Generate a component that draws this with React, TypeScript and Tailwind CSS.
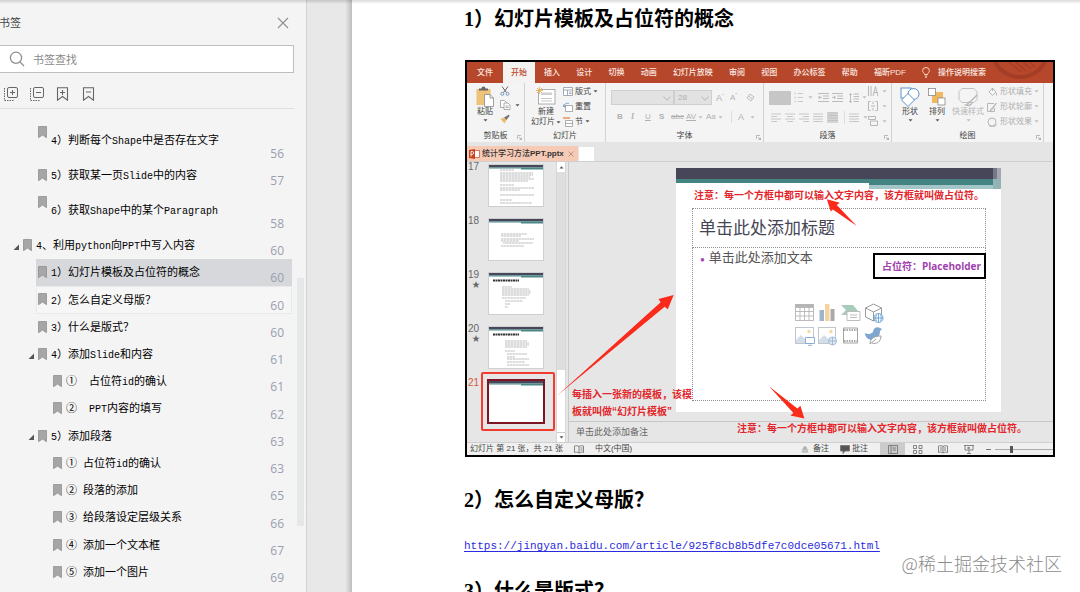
import React from "react";

type Level = 1 | 2 | 3;
type Mark = {
  level: Level;
  title: string;
  page: number;
  open?: boolean;
  state?: "selected" | "hover";
};

const upperMarks: Mark[] = [
  { level: 2, title: "4）判断每个Shape中是否存在文字", page: 56 },
  { level: 2, title: "5）获取某一页Slide中的内容", page: 57 },
  { level: 2, title: "6）获取Shape中的某个Paragraph", page: 58 },
];

const lowerMarks: Mark[] = [
  { level: 1, title: "4、利用python向PPT中写入内容", page: 60, open: true },
  { level: 2, title: "1）幻灯片模板及占位符的概念", page: 60, state: "selected" },
  { level: 2, title: "2）怎么自定义母版？", page: 60, state: "hover" },
  { level: 2, title: "3）什么是版式？", page: 60 },
  { level: 2, title: "4）添加Slide和内容", page: 61, open: true },
  { level: 3, title: "①  占位符id的确认", page: 61 },
  { level: 3, title: "②  PPT内容的填写", page: 62 },
  { level: 2, title: "5）添加段落", page: 63, open: true },
  { level: 3, title: "① 占位符id的确认", page: 63 },
  { level: 3, title: "② 段落的添加", page: 65 },
  { level: 3, title: "③ 给段落设定层级关系", page: 66 },
  { level: 3, title: "④ 添加一个文本框", page: 67 },
  { level: 3, title: "⑤ 添加一个图片", page: 69 },
];

const indent: Record<Level, string> = { 1: "pl-[12px]", 2: "pl-[27px]", 3: "pl-[42px]" };

/* Latin runs are set in a typewriter face, half as wide as the Chinese glyphs. */
function Mixed({ text }: { text: string }) {
  return (
    <>
      {text.split(/([\x20-\x7e]+)/).map((part, i) =>
        i % 2 ? (
          <span key={i} className="font-['Liberation_Mono',monospace] text-[10px]">
            {part}
          </span>
        ) : (
          part
        ),
      )}
    </>
  );
}

function MarkRow({ mark }: { mark: Mark }) {
  const tone =
    mark.state === "selected"
      ? "bg-[#d6d8dc] border-[#d6d8dc]"
      : mark.state === "hover"
        ? "bg-[#f6f6f6] border-[#e8eaea]"
        : "border-transparent";
  return (
    <li className={`flex ${indent[mark.level]}`}>
      <span className="flex w-[9px] items-center">
        {mark.open && (
          <svg width="7" height="7" viewBox="0 0 7 7" className="mt-[3px] ml-px">
            <path d="M6 0.5V6H0.5Z" fill="#555" />
          </svg>
        )}
      </span>
      <a href={`#p${mark.page}`} className={`flex min-w-0 flex-1 border pr-[7px] pl-px ${tone}`}>
        <svg width="9" height="13" viewBox="0 0 9 13" className="mt-[6px] shrink-0">
          <path d="M0.5 0.5h8v11.2L4.5 9 0.5 11.7z" fill="#a6a6a6" stroke="#909090" strokeWidth="0.8" />
        </svg>
        <span className="ml-[4px] flex-1 self-center text-[11px] leading-4 whitespace-pre text-black">
          <Mixed text={mark.title} />
        </span>
        <span className="self-end font-['Open_Sans','Noto_Sans',sans-serif] text-[12px] leading-[14px] text-[#9a9eae]">
          {mark.page}
        </span>
      </a>
    </li>
  );
}

function BookmarkPanel() {
  return (
    <aside className="flex w-[307px] shrink-0 flex-col border-r border-[#d4d4d4] bg-[#f4f4f4]">
      <header className="flex h-[45px] items-center justify-between pr-[17px]">
        <h2 className="-ml-px text-[11px] text-[#444]">书签</h2>
        <button aria-label="关闭">
          <svg width="12" height="12" viewBox="0 0 12 12" stroke="#8f8f8f" strokeWidth="1.1">
            <path d="M1 1l10 10M11 1L1 11" />
          </svg>
        </button>
      </header>
      <label className="mr-[12px] flex h-[28px] items-center border-y border-r border-[#bcbfc2] bg-white pl-[9px]">
        <svg width="16" height="16" viewBox="0 0 16 16" fill="none" stroke="#8b9095" strokeWidth="1.3">
          <circle cx="7" cy="6.8" r="5.6" />
          <path d="M11 11l4 4" />
        </svg>
        <input
          aria-label="书签查找"
          placeholder="书签查找"
          className="ml-[8px] min-w-0 flex-1 bg-transparent text-[11px] outline-none placeholder:text-[#8a8a8a]"
        />
      </label>
      <div className="mr-[12px] flex h-[36px] items-center gap-[12px] border-b border-[#dfdfdf] pt-[7px] pl-[4px]">
        <button aria-label="展开">
          <svg width="14" height="14" viewBox="0 0 14 14" fill="none" stroke="#666" strokeWidth="1">
            <rect x="3.5" y="0.5" width="10" height="10" rx="1.5" />
            <path d="M8.5 3v5M6 5.5h5" />
            <path d="M0.5 1v12.5h10" strokeDasharray="1.5 1" />
          </svg>
        </button>
        <button aria-label="收起">
          <svg width="14" height="14" viewBox="0 0 14 14" fill="none" stroke="#666" strokeWidth="1">
            <rect x="3.5" y="0.5" width="10" height="10" rx="1.5" />
            <path d="M6 5.5h5" />
            <path d="M0.5 1v12.5h10" strokeDasharray="1.5 1" />
          </svg>
        </button>
        <button aria-label="添加书签">
          <svg width="14" height="14" viewBox="0 0 14 14" fill="none" stroke="#666" strokeWidth="1.1">
            <path d="M1.5 0.7h10v12.5L6.5 9.5l-5 3.7zM6.5 3v5M4 5.5h5" />
          </svg>
        </button>
        <button aria-label="删除书签">
          <svg width="14" height="14" viewBox="0 0 14 14" fill="none" stroke="#666" strokeWidth="1.1">
            <path d="M1.5 0.7h10v12.5L6.5 9.5l-5 3.7zM4 5h5" />
          </svg>
        </button>
      </div>
      <nav className="relative mt-[10px] pr-[14px]">
        <ul className="grid h-[113px] grid-rows-[43px_27px_43px]">
          {upperMarks.map((m) => (
            <MarkRow key={m.title} mark={m} />
          ))}
        </ul>
        <ul className="grid h-[354px] auto-rows-fr">
          {lowerMarks.map((m, i) => (
            <MarkRow key={i} mark={m} />
          ))}
        </ul>
        <span className="absolute top-[159px] right-[2px] h-[248px] w-[7px] bg-[#e5e7e9]" />
      </nav>
    </aside>
  );
}

const Down = ({ dim = false }: { dim?: boolean }) => (
  <svg width="5" height="3" viewBox="0 0 5 3" className="shrink-0">
    <path d="M0.5 0.2h4L2.5 2.6z" fill={dim ? "#bdbdbd" : "#555"} />
  </svg>
);

function Group({
  label,
  width,
  corner = true,
  children,
}: {
  label: string;
  width: string;
  corner?: boolean;
  children: React.ReactNode;
}) {
  return (
    <section className={`relative flex shrink-0 flex-col border-r border-[#d2d2d2] ${width}`}>
      <div className="flex h-[47px] pt-[3px]">{children}</div>
      <h4 className="text-center text-[8px] leading-[12px] text-[#444]">{label}</h4>
      {corner && (
        <svg width="5" height="5" viewBox="0 0 5 5" className="absolute right-[2px] bottom-[2px]" stroke="#999" strokeWidth="0.7" fill="none">
          <path d="M0.4 4V0.4H4M2 2l2.6 2.6M4.6 2.5v2.1H2.5" />
        </svg>
      )}
    </section>
  );
}

const tabs = ["插入", "设计", "切换", "动画", "幻灯片放映", "审阅", "视图", "办公标签", "帮助", "福昕PDF"];

function Lines({ align }: { align: "left" | "center" | "right" | "full" }) {
  const d = {
    left: "M0 1h10M0 3.5h6M0 6h10M0 8.5h6",
    center: "M0 1h10M2 3.5h6M0 6h10M2 8.5h6",
    right: "M0 1h10M4 3.5h6M0 6h10M4 8.5h6",
    full: "M0 1h10M0 3.5h10M0 6h10M0 8.5h10",
  }[align];
  return (
    <svg width="10" height="10" viewBox="0 0 10 10" stroke="#bcbcbc" strokeWidth="0.8">
      <path d={d} />
    </svg>
  );
}

function Combo({ label, value, width }: { label: string; value: string; width: string }) {
  return (
    <span className={`relative block h-[15px] border border-[#cfcfcf] bg-[#e2e2e2] ${width}`}>
      <select aria-label={label} className="block h-[13px] w-full appearance-none pl-[3px] text-[8px] leading-[13px] text-[#b0b0b0]">
        <option>{value}</option>
      </select>
      <svg width="8" height="5" viewBox="0 0 8 5" className="pointer-events-none absolute top-[5px] right-[2px]" fill="none" stroke="#b2b2b2" strokeWidth="0.9">
        <path d="M0.5 0.5L4 4.3 7.5 0.5" />
      </svg>
    </span>
  );
}

function Ribbon() {
  return (
    <>
      <div className="flex h-[21px] items-stretch bg-[#b7472a] text-[8px] font-medium text-[#fbe9e3]">
        <button className="px-[10px]">文件</button>
        <button className="bg-[#f4f3f2] px-[8px] text-[#c0492c]">开始</button>
        <div className="flex w-[371px] justify-between pl-[9px]">
          {tabs.map((t) => (
            <button key={t} className="whitespace-nowrap">
              {t}
            </button>
          ))}
        </div>
        <button className="ml-[16px] flex items-center gap-[8px] whitespace-nowrap">
          <svg width="8" height="11" viewBox="0 0 8 11" fill="none" stroke="#ffe3c8" strokeWidth="0.9">
            <path d="M2.5 7.5C2.5 6 0.6 5.5 0.6 3.7a3.4 3.2 0 0 1 6.8 0C7.4 5.5 5.5 6 5.5 7.5zM2.7 9h2.6M3.2 10.4h1.6" />
          </svg>
          操作说明搜索
        </button>
        <svg viewBox="0 0 66 21" className="ml-auto h-[21px] w-[66px]" fill="none" stroke="#a33d26">
          <path d="M8 0c5 9 14 15 25 15S53 9 58 0" strokeWidth="4" />
          <path d="M22 0l12 10M29 0l10 9M36 0l8 7M43 0l5 5" strokeWidth="1.2" />
        </svg>
      </div>

      <div className="flex h-[59px] bg-[#f4f4f4] text-[8px] text-[#444]">
        <Group label="剪贴板" width="w-[58px]">
          <button className="ml-[9px] flex w-[18px] flex-col items-center">
            <svg width="18" height="21" viewBox="0 0 18 21" className="shrink-0">
              <rect x="0.5" y="3" width="14" height="16" fill="#eec277" />
              <path d="M3 4.5V2.5h2.5a2 2 0 0 1 4 0H12v2z" fill="#666" />
              <path d="M8.5 8.5h5.5l3.5 3.5v8.5h-9z" fill="#fff" stroke="#888" strokeWidth="0.8" />
              <path d="M14 8.5V12h3.5" fill="none" stroke="#888" strokeWidth="0.8" />
            </svg>
            <span className="leading-[10px]">粘贴</span>
            <span className="mt-[2px]"><Down /></span>
          </button>
          <div className="ml-[6px] flex flex-col gap-[4px]">
            <button aria-label="剪切">
              <svg width="10" height="10" viewBox="0 0 10 10" fill="none" strokeWidth="0.9">
                <path d="M2 0.5l4.5 6M8 0.5L3.5 6.5" stroke="#555" />
                <circle cx="2.3" cy="7.8" r="1.5" stroke="#6b8fb5" />
                <circle cx="7.5" cy="7.8" r="1.5" stroke="#6b8fb5" />
              </svg>
            </button>
            <button aria-label="复制" className="flex items-center gap-[4px]">
              <svg width="11" height="10" viewBox="0 0 11 10" fill="#fff" stroke="#999" strokeWidth="0.8">
                <path d="M0.5 0.5h4l2 2v5h-6z" />
                <path d="M4 3h4l2 2v4.5H4zM5.5 6h3M5.5 7.5h3" />
              </svg>
              <Down />
            </button>
            <button aria-label="格式刷">
              <svg width="10" height="10" viewBox="0 0 10 10">
                <path d="M0.5 5L4 3.5 6.5 6 4.5 9.5z" fill="#eebb6e" />
                <path d="M4 3.5L9 0.5l0.5 1.5L6.5 6z" fill="#777" />
              </svg>
            </button>
          </div>
        </Group>

        <Group label="幻灯片" width="w-[81px]" corner={false}>
          <button className="ml-[6px] flex w-[30px] flex-col items-center">
            <svg width="20" height="19" viewBox="0 0 20 19" className="mt-[1px] shrink-0">
              <rect x="2.5" y="2.5" width="16.5" height="14.5" fill="#fff" stroke="#999" strokeWidth="0.8" />
              <rect x="5" y="5.5" width="11" height="2.5" fill="#d0d0d0" />
              <path d="M5 11.5h11M5 14h11" stroke="#bbb" strokeWidth="0.8" />
              <path d="M3.5 0v7M0 3.5h7M1 1l5 5M6 1L1 6" stroke="#e9b45c" strokeWidth="0.9" />
            </svg>
            <span className="mt-px leading-[10px]">新建</span>
            <span className="flex items-center gap-px leading-[10px] whitespace-nowrap">
              幻灯片
              <Down />
            </span>
          </button>
          <div className="ml-[2px] flex flex-col gap-[4px]">
            {["版式", "重置", "节"].map((t) => (
              <button key={t} className="flex h-[11px] items-center gap-[2px] whitespace-nowrap">
                <svg width="10" height="10" viewBox="0 0 10 10" fill="#fff" strokeWidth="0.8">
                  {t === "版式" && <path d="M0.5 0.5h9v8h-9zM0.5 3h9M4.5 3v5.5M6 5h2.5M6 6.5h2.5" stroke="#8b98a3" />}
                  {t === "重置" && (
                    <>
                      <path d="M2.5 3.5h7v6h-7z" stroke="#999" />
                      <path d="M1 4.5C1 1.5 4 0.7 6 1.5M0.2 2.5L1 5l2-1.5" fill="none" stroke="#4f8dc5" />
                    </>
                  )}
                  {t === "节" && (
                    <>
                      <path d="M0 1h7" stroke="#e88a4a" strokeWidth="1.4" />
                      <path d="M2.5 3.5h7v6h-7zM2.5 6.5h7" stroke="#999" />
                    </>
                  )}
                </svg>
                {t}
                {t !== "重置" && <Down />}
              </button>
            ))}
          </div>
        </Group>

        <Group label="字体" width="w-[158px]">
          <div className="flex flex-1 flex-col pt-[4px] pl-[5px] text-[#b0b0b0]">
            <div className="flex items-center">
              <Combo label="字体" value=" " width="w-[63px]" />
              <Combo label="字号" value="28" width="w-[38px]" />
              <button className="ml-[4px] text-[9px] leading-[12px]">A<sup className="text-[6px]">ˆ</sup></button>
              <button className="ml-[6px] text-[8px] leading-[12px]">A<sup className="text-[6px]">ˇ</sup></button>
              <button aria-label="清除格式" className="ml-[9px]">
                <svg width="9" height="9" viewBox="0 0 9 9" fill="none" stroke="#bbb">
                  <path d="M1 5l3-4 4 3-3 4zM2.5 3l4 3" />
                </svg>
              </button>
            </div>
            <div className="mt-[6px] flex items-center pl-[6px] leading-[12px]">
              <button className="w-[14px] text-left font-bold">B</button>
              <button className="w-[14px] text-left font-['Liberation_Serif',serif] font-bold italic">I</button>
              <button className="w-[14px] text-left underline">U</button>
              <button className="w-[12px] text-left font-bold">S</button>
              <button className="w-[15px] text-left text-[8px] line-through">abc</button>
              <button className="flex w-[20px] items-center gap-[2px] underline">AV<Down dim /></button>
              <button className="flex w-[25px] items-center gap-[2px]">Aa<Down dim /></button>
              <span className="h-[12px] w-px bg-[#ddd]" />
              <button className="ml-[6px] flex items-center gap-[6px] text-[9px]">A<Down dim /></button>
            </div>
          </div>
        </Group>

        <Group label="段落" width="w-[128px]">
          <div className="flex flex-1 flex-col pt-[4px] pl-[5px]">
            <div className="flex h-[15px] items-center">
              <span className="h-[14px] w-[22px] bg-[#c6c6c6]" />
              <button aria-label="编号" className="ml-[3px] flex items-center gap-[4px]">
                <svg width="10" height="11" viewBox="0 0 10 11" stroke="#bcbcbc" strokeWidth="0.8">
                  <path d="M1 0.5v2M1 4.5v2M1 8.5v2M3.5 1.5H9M3.5 5.5H9M3.5 9.5H9" />
                </svg>
                <Down dim />
              </button>
              <button aria-label="减少缩进" className="ml-[5px]">
                <svg width="11" height="9" viewBox="0 0 11 9" stroke="#b4b4b4" strokeWidth="0.9" fill="none">
                  <path d="M0 0.5h11M5 3h6M5 5.5h6M0 8.5h11M4 4.3H0.5M2 2.7L0.5 4.3 2 6" />
                </svg>
              </button>
              <button aria-label="增加缩进" className="ml-[3px]">
                <svg width="11" height="9" viewBox="0 0 11 9" stroke="#b4b4b4" strokeWidth="0.9" fill="none">
                  <path d="M0 0.5h11M5 3h6M5 5.5h6M0 8.5h11M0 4.3h3.5M2 2.7l1.5 1.6L2 6" />
                </svg>
              </button>
              <button aria-label="行距" className="ml-[6px] flex items-center gap-[3px]">
                <svg width="10" height="10" viewBox="0 0 10 10" stroke="#b4b4b4" strokeWidth="0.9" fill="none">
                  <path d="M1.5 0.5v9M0.2 2l1.3-1.5L2.8 2M0.2 8l1.3 1.5L2.8 8M4.5 1H10M4.5 3.5H10M4.5 6H10M4.5 8.5H10" />
                </svg>
                <Down dim />
              </button>
            </div>
            <div className="mt-[6px] flex items-center gap-[4px] pl-[2px]">
              <Lines align="left" />
              <Lines align="center" />
              <Lines align="right" />
              <Lines align="full" />
              <span className="h-[11px] w-[11px] bg-[#d4d4d4] px-px"><Lines align="full" /></span>
              <span className="ml-[2px] h-[13px] w-px bg-[#ddd]" />
              <Lines align="full" />
              <Down dim />
            </div>
          </div>
          <div className="flex w-[24px] flex-col gap-[4px]">
            {["M0.5 0v10M3 0v10M5 10L7.5 0.5 10 10M6 6.5h3", "M2.5 0.5h-2v9h2M7.5 0.5h2v9h-2M3 5h4M5 0.5V3M5 7v2.5", "M0.5 0.5h7v3h-7zM2.5 5h7v4.5h-7z"].map((d) => (
              <button key={d} aria-label="文字选项" className="flex items-center gap-[3px]">
                <svg width="11" height="11" viewBox="0 0 11 11" fill="none" stroke="#b0b0b0" strokeWidth="0.9">
                  <path d={d} />
                </svg>
                <Down dim />
              </button>
            ))}
          </div>
        </Group>

        <Group label="绘图" width="w-[152px]">
          <button className="ml-[7px] flex w-[22px] flex-col items-center">
            <svg width="20" height="20" viewBox="0 0 20 20" fill="#fff" stroke="#4e86c6" strokeWidth="0.9" className="mt-px shrink-0">
              <rect x="1" y="1" width="10" height="10" />
              <circle cx="13.5" cy="7" r="5.5" />
              <path d="M8 6.5l6.5 6.5L8 19.5 1.5 13z" />
            </svg>
            <span className="leading-[10px]">形状</span>
            <span className="mt-[2px]"><Down /></span>
          </button>
          <button className="ml-[5px] flex w-[22px] flex-col items-center">
            <svg width="20" height="20" viewBox="0 0 20 20" strokeWidth="0.8" className="mt-px shrink-0">
              <rect x="5" y="5" width="11" height="11" fill="#f0b95f" />
              <rect x="1.5" y="1.5" width="7" height="7" fill="#fff" stroke="#888" />
              <rect x="11" y="11" width="7" height="7" fill="#fff" stroke="#888" />
            </svg>
            <span className="leading-[10px]">排列</span>
            <span className="mt-[2px]"><Down /></span>
          </button>
          <button className="ml-[4px] flex w-[32px] flex-col items-center text-[#b5b5b5]">
            <svg width="22" height="20" viewBox="0 0 22 20" fill="none" stroke="#bbb" className="mt-px shrink-0">
              <path d="M5 1.5h12l3 3v8l-3 3H5l-3-3v-8z" strokeWidth="0.9" />
              <path d="M20 8l-6 6M14 14c-2 0-2 3-5 4 3 1 6 0 6-3" strokeWidth="1.5" />
            </svg>
            <span className="leading-[10px]">快速样式</span>
            <span className="mt-[2px]"><Down dim /></span>
          </button>
          <div className="ml-[3px] flex flex-col gap-[4px] text-[#b0b0b0]">
            {[
              ["形状填充", "M2 5l3.5-4L9 5 5.5 8.5zM5.5 1v3M9.5 6v2.5"],
              ["形状轮廓", "M7 1.5H0.5v8h7V6M9.5 1L4 7l-1 1.5L5 8z"],
              ["形状效果", "M1 5a4 4 0 1 1 8 0 4 4 0 1 1-8 0M2 8.5c3 2 6 1.5 8-1"],
            ].map(([t, d]) => (
              <button key={t} className="flex h-[11px] items-center gap-[2px] whitespace-nowrap">
                <svg width="11" height="10" viewBox="0 0 11 10" fill="none" stroke="#b0b0b0" strokeWidth="0.9">
                  <path d={d} />
                </svg>
                {t}
                <Down dim />
              </button>
            ))}
          </div>
        </Group>
      </div>

      <div className="flex h-[20px] items-end border-b border-[#cfcfcf] bg-[#e5e5e5]">
        <div className="flex h-[15px] w-[111px] items-center bg-[#f6cab5] pl-[2px] text-[8px] font-medium text-[#333]">
          <svg width="11" height="10" viewBox="0 0 11 10" className="mr-[2px] shrink-0">
            <path d="M5 1.5h5.5v7H5z" fill="#fff" stroke="#c0492c" strokeWidth="0.7" />
            <path d="M0 1l6-1v10L0 9z" fill="#c8421f" />
            <path d="M2 7.5v-5h1.3a1.3 1.4 0 0 1 0 2.8H2" fill="none" stroke="#fff" strokeWidth="0.9" />
          </svg>
          <span className="flex-1 whitespace-nowrap">统计学习方法<b>PPT.pptx</b></span>
          <button aria-label="关闭文档" className="mr-[4px]">
            <svg width="6" height="6" viewBox="0 0 6 6" stroke="#a58a7f" strokeWidth="0.8">
              <path d="M0.5 0.5l5 5M5.5 0.5l-5 5" />
            </svg>
          </button>
        </div>
        <span className="ml-px h-[14px] w-[15px] bg-white" />
      </div>
    </>
  );
}

const thumbText: Record<number, string> = {
  17: "M11 5h14M11 8h33M11 10h33M11 12h30M11 14h34M11 16h28M11 20h14M11 23h34M11 25h20M11 30h34M11 35h12M11 38h32",
  18: "M12 15h26M12 17h20M12 20h33M12 22h18M14 24h30M12 27h23",
  19: "M13 14h10M13 16h27M13 18h29M13 20h29M13 22h27M13 25h24M16 28h18M16 31h5M16 34h3",
  20: "M16 14h22M16 16h24M16 18h24M16 20h22M16 24h10M18 27h20M18 30h8M18 32h22M18 35h18M18 38h22",
  21: "",
};

function Thumb({ n }: { n: number }) {
  const current = n === 21;
  return (
    <li className="flex h-[54px] shrink-0 pl-[1px]">
      <span className={`w-[21px] text-[10px] leading-[10px] ${current ? "text-[#d8573a]" : "text-[#666]"}`}>
        {n}
        {(n === 19 || n === 20) && <span className="block pl-[4px] text-[8px] leading-[10px]">★</span>}
      </span>
      <svg
        width="54"
        height="41"
        viewBox="0 0 54 41"
        className={`mt-[3px] bg-white ${current ? "outline-2 outline-[#7c1624]" : "outline outline-[#cfcfcf]"}`}
      >
        <path d="M0 0h54v2.4H0z" fill="#45475a" />
        <path d="M0 2.4h54v1H0zM32 3.4h22v1H32z" fill="#4b8987" />
        {(n === 19 || n === 20) && <path d="M4 7.5h26" stroke="#333" strokeWidth="2" strokeDasharray="2 0.5" />}
        <path d={thumbText[n]} stroke="#aaa" strokeWidth="0.8" strokeDasharray="2.5 0.4" />
      </svg>
    </li>
  );
}

function PlaceholderIcons() {
  return (
    <svg width="92" height="44" viewBox="0 0 92 44" className="absolute top-[54px] left-[101px]" fill="none" strokeWidth="0.9">
      <g stroke="#b5b5b5">
        <rect x="1.5" y="2.5" width="18" height="16" fill="#fff" />
        <path d="M1.5 2.5h18v3h-18z" fill="#b5b5b5" />
        <path d="M1.5 9.5h18M1.5 14h18M6 5.5v13M10.5 5.5v13M15 5.5v13" />
      </g>
      <path d="M25.5 8h4.5v11h-4.5z" fill="#9db5d0" />
      <path d="M31 2h4.5v17H31z" fill="#f3d4a0" />
      <path d="M36.5 7h4v12h-4z" fill="#a9a9a9" />
      <path d="M47 3h12l5 6v4H47l5-5z" fill="#a8cbbb" />
      <path d="M53 9.5h13v9H53zM56 13h7M56 15.5h7" fill="#fff" stroke="#b5b5b5" />
      <path d="M71.5 6l8-4 8 4v9l-8 4-8-4zM71.5 6l8 4 8-4M79.5 10v9" fill="#fff" stroke="#8f8f8f" />
      <circle cx="84.5" cy="16" r="4.5" fill="#fff" stroke="#659fd3" />
      <path d="M80 16h9M84.5 11.5v9M82.5 12.5c-1 2-1 5 0 7M86.5 12.5c1 2 1 5 0 7" stroke="#659fd3" />
      <g stroke="#b9c1ca">
        <rect x="1.5" y="25.5" width="18" height="16" fill="#fff" />
        <path d="M2 38l5-5 4 4 3-2v6H2z" fill="#d4dee8" stroke="none" />
        <circle cx="15" cy="29.5" r="1.7" fill="#f7d9a0" stroke="none" />
        <path d="M11.5 35.5h9v6h-9zM14 43.3h4" fill="#fff" stroke="#7fa8cf" />
        <rect x="24.5" y="25.5" width="17" height="16" fill="#fff" />
        <path d="M25 38l5-5 4 4 3-2v6H25z" fill="#d4dee8" stroke="none" />
        <circle cx="37" cy="29.5" r="1.7" fill="#f7d9a0" stroke="none" />
        <circle cx="38.5" cy="39" r="4" fill="#dce8f4" stroke="#9fb8d4" />
        <path d="M38.5 35v8M34.5 39h8" stroke="#9fb8d4" />
      </g>
      <path d="M49.5 26h14v15h-14z" fill="#fff" stroke="#999" />
      <path d="M50 28h13M50 39h13" stroke="#a9a9a9" strokeWidth="2" strokeDasharray="1.5 1" />
      <path d="M71 31c3 2 6 1 8-1 0-4 4-6 7-4l2 1-2 2c0 7-5 9-9 9-4-1-6-4-6-7z" fill="#7ea6cf" />
      <path d="M76 42c0-6 5-8 11-8 0 5-4 9-9 7M76 42l6-5" fill="#fff" stroke="#999" />
    </svg>
  );
}

function Slide() {
  return (
    <div className="absolute top-[6px] left-[107px] h-[244px] w-[325px] bg-white">
      <div className="flex h-[11px]">
        <span className="flex-1 bg-[#464658]" />
        <span className="w-[4px] bg-[#77778a]" />
        <span className="w-[4px] bg-[#a5a5b0]" />
      </div>
      <div className="flex h-[10px] items-start">
        <span className="h-[4px] w-[193px] bg-[#438381]" />
        <span className="h-[10px] flex-1 border-b-4 border-[#a4c6c8] bg-[#438381]" />
        <span className="h-[10px] w-[8px] bg-[#93b3b7]" />
      </div>
      <p className="mt-[1px] ml-[18px] text-[10px] leading-[12px] font-bold whitespace-nowrap text-[#e3262c]">
        注意：每一个方框中都可以输入文字内容，该方框就叫做占位符。
      </p>
      <div className="mt-[6px] mr-[15px] ml-[16px] flex h-[40px] items-center border border-dotted border-[#8f8f8f] pt-[2px] pl-[6px] text-[17px] text-[#454655]">
        单击此处添加标题
      </div>
      <div className="relative mr-[15px] ml-[16px] h-[153px] border border-t-0 border-dotted border-[#8f8f8f] pl-[7px] text-[#555]">
        <p className="text-[13px] leading-[19px]">
          <span className="mr-[4px] inline-block text-[8px] text-[#a449b4]">●</span>
          单击此处添加文本
        </p>
        <p className="absolute top-[5px] right-[-1px] flex h-[26px] items-center border-2 border-black bg-white pr-[3px] pl-[7px] font-['Open_Sans','Noto_Sans_CJK_SC',sans-serif] text-[10px] font-bold whitespace-nowrap text-[#a03fae]">
          占位符：Placeholder
        </p>
        <PlaceholderIcons />
      </div>
    </div>
  );
}

function StatusBar() {
  const s = { width: 10, height: 9, viewBox: "0 0 10 9", fill: "none", stroke: "#777", strokeWidth: 0.9 };
  return (
    <div className="flex h-[13px] items-center border-t border-[#cfcfcf] bg-[#f0f0f0] text-[8px] leading-[12px] whitespace-nowrap text-[#444]">
      <span className="ml-[3px]">幻灯片 第 21 张，共 21 张</span>
      <svg {...s} className="ml-[11px]">
        <path d="M5 1.5C3.5 0.5 2 0.5 0.5 1v6.5c1.5-0.5 3-0.5 4.5 0.5 1.5-1 3-1 4.5-0.5V1C8 0.5 6.5 0.5 5 1.5V8M6.5 3h2M6.5 5h2" />
      </svg>
      <span className="ml-[11px]">中文(中国)</span>
      <button className="ml-auto flex items-center gap-[4px]">
        <svg {...s} width="8">
          <path d="M5 0.5L7 3H3zM1 5h8M1 7.5h8" />
        </svg>
        备注
      </button>
      <button className="ml-[11px] flex items-center gap-[2px]">
        <svg {...s} fill="#555">
          <path d="M0.5 0.5h9v5.5H5L3 8.5V6H0.5z" />
        </svg>
        批注
      </button>
      <button aria-label="普通视图" className="ml-[12px] flex h-[12px] w-[25px] items-center justify-center bg-[#cbcbcb]">
        <svg {...s}>
          <path d="M0.5 0.5h9v8h-9zM3 0.5v8M4.5 3H8M4.5 5H8" />
        </svg>
      </button>
      <button aria-label="浏览视图" className="ml-[8px]">
        <svg {...s}>
          <path d="M0.5 0.5h3v3h-3zM6 0.5h3v3H6zM0.5 5.5h3v3h-3zM6 5.5h3v3H6z" />
        </svg>
      </button>
      <button aria-label="阅读视图" className="ml-[15px]">
        <svg {...s}>
          <path d="M5 1.5C3.5 0.5 2 0.5 0.5 1v6.5c1.5-0.5 3-0.5 4.5 0.5 1.5-1 3-1 4.5-0.5V1C8 0.5 6.5 0.5 5 1.5V8M2 3h2M6 3h2M2 5h2M6 5h2" />
        </svg>
      </button>
      <button aria-label="放映" className="ml-[16px]">
        <svg {...s}>
          <path d="M0 0.5h10M1 0.5v4.5h8V0.5M5 5v3.5M3 8.5h4M4 2v2l2-1z" />
        </svg>
      </button>
      <span className="ml-[12px] h-px w-[5px] bg-[#777]" />
      <input
        type="range"
        aria-label="缩放"
        defaultValue={28}
        className="ml-[4px] h-px w-[58px] appearance-none bg-[#aaa] [&::-webkit-slider-thumb]:h-[7px] [&::-webkit-slider-thumb]:w-[3px] [&::-webkit-slider-thumb]:appearance-none [&::-webkit-slider-thumb]:bg-[#555]"
      />
    </div>
  );
}

function PresentationFigure() {
  return (
    <figure className="relative mt-[25px] w-[590px] overflow-hidden border-2 border-black bg-[#e6e6e6] font-['Liberation_Sans','Noto_Sans_CJK_SC',sans-serif]">
      <Ribbon />
      <div className="flex h-[280px]">
        <ol className="flex w-[89px] shrink-0 flex-col overflow-hidden">
          {[17, 18, 19, 20, 21].map((n) => (
            <Thumb key={n} n={n} />
          ))}
        </ol>
        <div className="flex w-[10px] shrink-0 flex-col border-x border-[#d6d6d6] bg-[#dedede]">
          <span className="flex h-[10px] items-center justify-center bg-white">
            <svg width="5" height="3" viewBox="0 0 5 3">
              <path d="M0.5 2.6h4L2.5 0.2z" fill="#555" />
            </svg>
          </span>
          <span className="mt-auto h-[63px] border-b border-[#ccc] bg-white" />
          <span className="flex h-[9px] items-center justify-center bg-white"><Down /></span>
        </div>
        <div className="ml-[2px] flex min-w-0 flex-1 flex-col border-l border-[#c9c9c9]">
          <div className="relative flex-1">
            <Slide />
          </div>
          <p className="h-[21px] border-t border-[#c6c6c6] pl-[7px] text-[9px] leading-[20px] text-[#666]">单击此处添加备注</p>
        </div>
      </div>
      <StatusBar />

      <span className="absolute top-[310px] left-[14px] h-[59px] w-[74px] rounded-[2px] border-2 border-[#f23b2f]" />
      <p className="absolute top-[324px] left-[105px] text-[10px] leading-[17px] font-bold whitespace-nowrap text-[#e3262c]">
        每插入一张新的模板，该模
        <br />
        板就叫做“幻灯片模板”
      </p>
      <p className="absolute top-[361px] left-[270px] text-[10px] leading-[12px] font-bold whitespace-nowrap text-[#e3262c]">
        注意：每一个方框中都可以输入文字内容，该方框就叫做占位符。
      </p>
      <svg viewBox="467 62 586 394" className="pointer-events-none absolute inset-0 h-full w-full" fill="#fb2b1c">
        <path d="M556.5 396.5L660.4 302.8 658.2 299.5 673.5 295.5 667.5 310 664.4 307.4z" />
        <path d="M857 226.5L837 205.3 840 203 827 199.5 831 212 833 209.8z" />
        <path d="M769 387L793.5 413.8 790.4 416.5 804.5 419.5 800.5 406.5 797.5 409.4z" />
      </svg>
    </figure>
  );
}

function Heading({ children, gap }: { children: React.ReactNode; gap: string }) {
  return (
    <h1 className={`font-['Liberation_Serif','Noto_Sans_CJK_SC',serif] text-[20px] leading-[30px] font-bold text-black ${gap}`}>
      {children}
    </h1>
  );
}

export default function App() {
  return (
    <div className="relative flex h-screen overflow-hidden bg-[#e8e8e8] font-['Noto_Sans_CJK_SC',sans-serif]">
      <BookmarkPanel />
      <div className="w-[45px] shrink-0 bg-linear-to-r from-[#e8e8e8] from-85% to-[#bdbdbd]" />
      <main className="min-w-0 flex-1 bg-white pl-[112px]">
        <Heading gap="mt-[4px]">1）幻灯片模板及占位符的概念</Heading>
        <div className="pt-px pl-px">
          <PresentationFigure />
        </div>
        <Heading gap="mt-[28px]">2）怎么自定义母版？</Heading>
        <p className="mt-[21px] font-['Liberation_Mono',monospace] text-[11px] leading-[20px]">
          <a
            href="https://jingyan.baidu.com/article/925f8cb8b5dfe7c0dce05671.html"
            className="text-[#2b2be0] underline underline-offset-2"
          >
            https://jingyan.baidu.com/article/925f8cb8b5dfe7c0dce05671.html
          </a>
        </p>
        <Heading gap="mt-[20px]">3）什么是版式？</Heading>
      </main>
      <span className="absolute right-[18px] bottom-[17px] text-[18px] leading-[24px] font-light text-[#8c8c8c]">@稀土掘金技术社区</span>
      <span className="pointer-events-none absolute inset-x-0 top-0 h-[4px] bg-linear-to-b from-black/15 to-transparent" />
    </div>
  );
}
